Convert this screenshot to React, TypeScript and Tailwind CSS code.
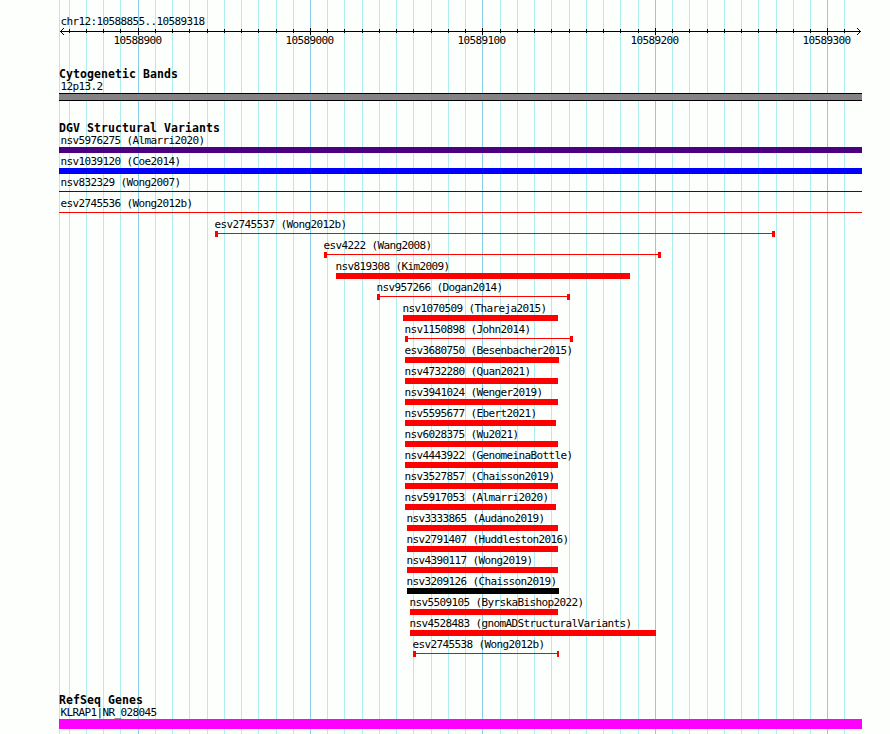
type Shape = 'box' | 'line' | 'span';

interface Variant {
  name: string;
  start: number;
  end: number;
  shape?: Shape;
  color?: string;
  endCap?: string;
}

const LEFT = 59;
const RIGHT = 862;

const VARIANTS: Variant[] = [
  { name: 'nsv5976275 (Almarri2020)', start: LEFT, end: RIGHT, color: 'bg-[#4b0082]' },
  { name: 'nsv1039120 (Coe2014)', start: LEFT, end: RIGHT, color: 'bg-[#0000ff]' },
  { name: 'nsv832329 (Wong2007)', start: LEFT, end: RIGHT, shape: 'line', color: 'bg-[#0000ff]' },
  { name: 'esv2745536 (Wong2012b)', start: LEFT, end: RIGHT, shape: 'line' },
  { name: 'esv2745537 (Wong2012b)', start: 215, end: 775, shape: 'span' },
  { name: 'esv4222 (Wang2008)', start: 324, end: 661, shape: 'span' },
  { name: 'nsv819308 (Kim2009)', start: 336, end: 630 },
  { name: 'nsv957266 (Dogan2014)', start: 377, end: 570, shape: 'span' },
  { name: 'nsv1070509 (Thareja2015)', start: 403, end: 558 },
  { name: 'nsv1150898 (John2014)', start: 405, end: 573, shape: 'span' },
  { name: 'esv3680750 (Besenbacher2015)', start: 405, end: 559 },
  { name: 'nsv4732280 (Quan2021)', start: 405, end: 558 },
  { name: 'nsv3941024 (Wenger2019)', start: 405, end: 558 },
  { name: 'nsv5595677 (Ebert2021)', start: 405, end: 556 },
  { name: 'nsv6028375 (Wu2021)', start: 405, end: 558 },
  { name: 'nsv4443922 (GenomeinaBottle)', start: 405, end: 558 },
  { name: 'nsv3527857 (Chaisson2019)', start: 405, end: 558 },
  { name: 'nsv5917053 (Almarri2020)', start: 405, end: 556 },
  { name: 'nsv3333865 (Audano2019)', start: 407, end: 558 },
  { name: 'nsv2791407 (Huddleston2016)', start: 407, end: 558 },
  { name: 'nsv4390117 (Wong2019)', start: 407, end: 558 },
  { name: 'nsv3209126 (Chaisson2019)', start: 407, end: 559, color: 'bg-black' },
  { name: 'nsv5509105 (ByrskaBishop2022)', start: 410, end: 558 },
  { name: 'nsv4528483 (gnomADStructuralVariants)', start: 410, end: 656 },
  { name: 'esv2745538 (Wong2012b)', start: 413, end: 559, shape: 'span', endCap: 'w-[2px]' },
];

const MINOR = [
  69, 86, 103, 120, 155, 172, 189, 207, 224, 241, 258, 276, 293, 327, 344, 362, 379, 396, 413, 431,
  448, 465, 500, 517, 534, 551, 569, 586, 603, 620, 638, 672, 689, 707, 724, 741, 758, 776, 793,
  810, 844,
];

const MAJOR = [
  { x: 138, label: '10588900' },
  { x: 310, label: '10589000' },
  { x: 482, label: '10589100' },
  { x: 655, label: '10589200' },
  { x: 827, label: '10589300' },
];

function Grid() {
  return (
    <svg className="absolute inset-0 -z-10" width={890} height={734} shapeRendering="crispEdges">
      {[LEFT, ...MINOR].map((x) => (
        <rect key={x} x={x} y={0} width={1} height={734} fill="#afeeee" />
      ))}
      {MAJOR.map(({ x }) => (
        <rect key={x} x={x} y={0} width={1} height={734} fill="#87ceeb" />
      ))}
    </svg>
  );
}

function Ruler() {
  return (
    <svg className="block" width={890} height={20} shapeRendering="crispEdges">
      <rect x={60} y={3} width={801} height={1} />
      {[0, 1, 2, 3].map((d) => (
        <g key={d}>
          <rect x={60 + d} y={3 - d} width={1} height={1} />
          <rect x={60 + d} y={3 + d} width={1} height={1} />
          <rect x={860 - d} y={3 - d} width={1} height={1} />
          <rect x={860 - d} y={3 + d} width={1} height={1} />
        </g>
      ))}
      {MINOR.map((x) => (
        <rect key={x} x={x} y={1} width={1} height={4} />
      ))}
      {MAJOR.map(({ x, label }) => (
        <g key={x}>
          <rect x={x} y={0} width={1} height={7} />
          <text x={x - 24.6} y={16}>{label}</text>
        </g>
      ))}
    </svg>
  );
}

function Title({ children }: { children: string }) {
  return (
    <h2 className="h-3 pl-[59px] text-[11.5px] leading-[13px] font-bold tracking-[0.077px] whitespace-pre">
      {children}
    </h2>
  );
}

function Label({ children }: { children: string }) {
  return <div className="h-[13px] pl-[60.4px] whitespace-pre">{children}</div>;
}

function Glyph({ start, end, shape = 'box', color = 'bg-[#ff0000]', endCap = 'w-[3px]' }: Variant) {
  const style = { marginLeft: start, width: end - start };

  if (shape === 'box') return <div className={`h-1.5 ${color}`} style={style} />;

  return (
    <div className="flex h-1.5" style={style}>
      {shape === 'span' && <div className={`w-[3px] ${color}`} />}
      <div className={`mt-0.5 h-px flex-1 ${color}`} />
      {shape === 'span' && <div className={`${endCap} ${color}`} />}
    </div>
  );
}

function VariantRow(variant: Variant) {
  const { name, start } = variant;
  return (
    <li className="h-[21px]">
      <div
        className="h-[13px] whitespace-pre"
        style={{ paddingLeft: start === LEFT ? start + 1.4 : start - 0.6 }}
      >
        {name}
      </div>
      <Glyph {...variant} />
    </li>
  );
}

export default function App() {
  return (
    <main className="relative isolate h-[734px] w-[890px] overflow-hidden bg-[#fdfffc] pt-[15px] font-['DejaVu_Sans_Mono',monospace] text-[11px] leading-[13px] tracking-[-0.62px] text-black">
      <Grid />

      <header>
        <Label>chr12:10588855..10589318</Label>
        <Ruler />
      </header>

      <section className="mt-5">
        <Title>Cytogenetic Bands</Title>
        <Label>12p13.2</Label>
        <div className="ml-[59px] h-2 w-[803px] border-y border-black bg-[#848284]" />
      </section>

      <section className="mt-[21px]">
        <Title>DGV Structural Variants</Title>
        <ul>
          {VARIANTS.map((v) => (
            <VariantRow key={v.name} {...v} />
          ))}
        </ul>
      </section>

      <section className="mt-[35px]">
        <Title>RefSeq Genes</Title>
        <Label>KLRAP1|NR_028045</Label>
        <div className="ml-[59px] h-2.5 w-[803px] bg-[#ff00ff]" />
      </section>
    </main>
  );
}
